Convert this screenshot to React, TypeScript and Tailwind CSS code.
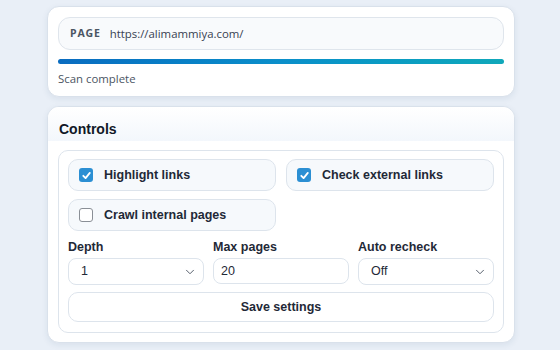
import { ChevronDown } from 'lucide-react'

const sans = { fontFamily: '"Open Sans", "Noto Sans", sans-serif' }

function Check({ checked }: { checked: boolean }) {
  return checked ? (
    <span className="flex h-[14px] w-[14px] items-center justify-center rounded-[3px] bg-[#2b8fd3]">
      <svg viewBox="0 0 12 12" className="h-[11px] w-[11px]" fill="none" stroke="white" strokeWidth="2" strokeLinecap="round" strokeLinejoin="round">
        <path d="M2.5 6.3 L5 8.8 L9.6 3.2" />
      </svg>
    </span>
  ) : (
    <span className="h-[14px] w-[14px] rounded-[3px] border border-[#8a8f96] bg-white" />
  )
}

function Toggle({ label, checked }: { label: string; checked: boolean }) {
  return (
    <label className="flex h-[32px] items-center gap-[11px] rounded-[10px] border border-[#dde4ec] bg-[#f6f9fc] px-[10px]">
      <Check checked={checked} />
      <span className="text-[12.5px] font-bold text-[#1f2937] font-['Liberation_Sans',sans-serif]">{label}</span>
    </label>
  )
}

function Select({ value }: { value: string }) {
  return (
    <div className="flex h-[27px] items-center justify-between rounded-[8px] border border-[#dde4ec] bg-white pl-[12px] pr-[6px]">
      <span className="text-[12.5px] text-[#1f2937] font-['Liberation_Sans',sans-serif]">{value}</span>
      <ChevronDown className="h-[14px] w-[14px] text-[#4b5563]" strokeWidth={1.6} />
    </div>
  )
}

function Field({ label, children }: { label: string; children: React.ReactNode }) {
  return (
    <div className="flex flex-col gap-[3px]">
      <span className="text-[12.5px] font-bold leading-[16px] text-[#1f2937] font-['Liberation_Sans',sans-serif]">{label}</span>
      {children}
    </div>
  )
}

export default function App() {
  return (
    <div className="min-h-[350px] bg-[#e9eff7] pl-[47px] pr-[45px] pt-[6px]" style={sans}>
      <div className="flex flex-col rounded-[12px] border border-[#d9e1eb] bg-white px-[10px] pt-[10px] pb-[9px] shadow-[0_2px_6px_rgba(30,60,100,0.08)]">
        <div className="flex h-[33px] items-center gap-[9px] rounded-[12px] border border-[#dfe5ec] bg-[#f8fafc] px-[11px]">
          <span className="text-[10.5px] font-bold tracking-[0.08em] text-[#4b5563]">PAGE</span>
          <span className="text-[11.4px] text-[#374151]">https://alimammiya.com/</span>
        </div>
        <div className="mt-[9px] h-[5px] rounded-full bg-gradient-to-r from-[#0a6cc0] via-[#0b8fca] to-[#10a8ba]" />
        <div className="mt-[7px] text-[11.4px] leading-[16px] text-[#4b5563]">Scan complete</div>
      </div>

      <div className="mt-[9px] overflow-hidden rounded-[12px] border border-[#d9e1eb] bg-white shadow-[0_2px_6px_rgba(30,60,100,0.08)]">
        <div className="h-[34px] bg-gradient-to-b from-white to-[#f3f7fc] px-[11px] pt-[14px]">
          <div className="text-[14px] font-bold leading-[16px] text-[#111827] font-['Liberation_Sans',sans-serif]">Controls</div>
        </div>
        <div className="px-[10px] pt-[9px] pb-[9px]">
          <div className="flex flex-col rounded-[10px] border border-[#dde4ec] bg-white px-[9px] pt-[8px] pb-[10px]">
            <div className="grid grid-cols-2 gap-x-[10px] gap-y-[8px]">
              <Toggle label="Highlight links" checked />
              <Toggle label="Check external links" checked />
              <Toggle label="Crawl internal pages" checked={false} />
            </div>
            <div className="mt-[8px] grid grid-cols-3 gap-[9px]">
              <Field label="Depth">
                <Select value="1" />
              </Field>
              <Field label="Max pages">
                <div className="flex h-[26px] items-center rounded-[8px] border border-[#dde4ec] bg-white px-[7px] text-[12.5px] text-[#1f2937] font-['Liberation_Sans',sans-serif]">
                  20
                </div>
              </Field>
              <Field label="Auto recheck">
                <Select value="Off" />
              </Field>
            </div>
            <button className="mt-[7px] h-[30px] rounded-[10px] border border-[#dde4ec] bg-white text-[12.5px] font-bold text-[#1f2937] font-['Liberation_Sans',sans-serif]">
              Save settings
            </button>
          </div>
        </div>
      </div>
    </div>
  )
}
